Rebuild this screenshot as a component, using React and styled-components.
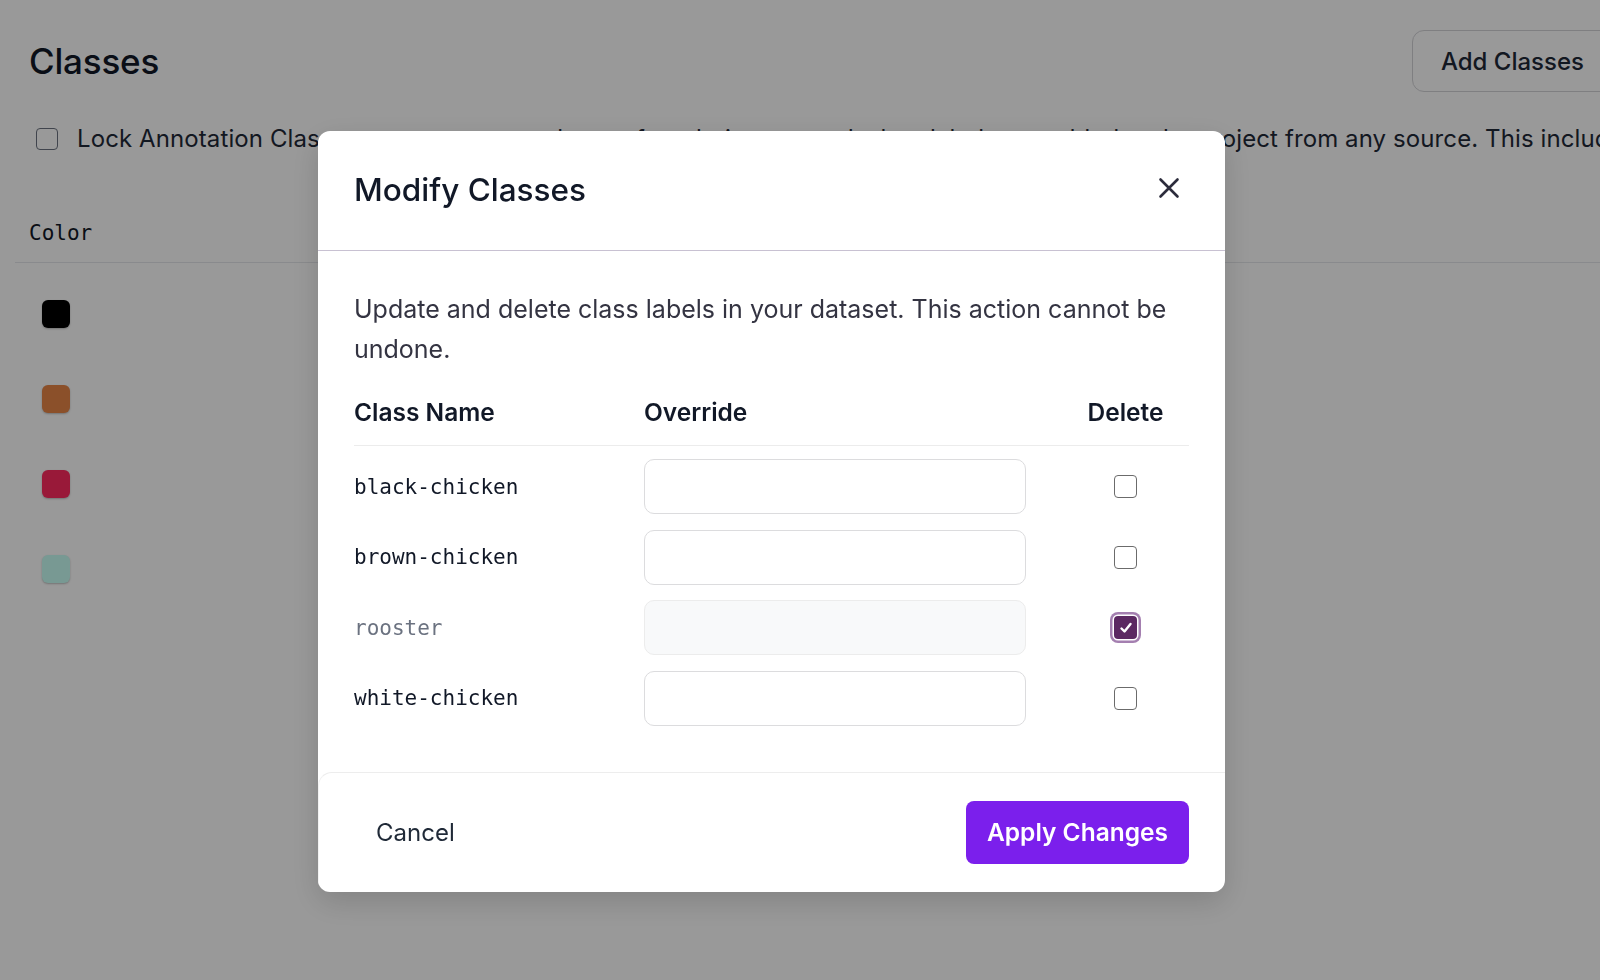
import React from "react";
import styled, { createGlobalStyle } from "styled-components";

const GlobalStyle = createGlobalStyle`
  html, body {
    margin: 0;
    padding: 0;
    background: #ffffff;
    overflow: hidden;
  }
  body {
    font-family: Inter, "Liberation Sans", Arial, sans-serif;
    color: #111827;
  }
  * {
    box-sizing: border-box;
  }
`;

const Page = styled.div`
  width: 1642px;
  height: 980px;
  padding: 30px 29px 0 29px;
`;

const PageHeader = styled.div`
  display: flex;
  align-items: center;
  justify-content: space-between;
  height: 62px;
`;

const PageTitle = styled.h1`
  margin: 0;
  font-size: 35px;
  font-weight: 500;
  letter-spacing: -0.2px;
  color: #111827;
`;

const OutlineButton = styled.button`
  height: 62px;
  padding: 0 28px;
  border: 1px solid #d4d4d8;
  border-radius: 12px;
  background: #ffffff;
  font-family: inherit;
  font-size: 24px;
  font-weight: 500;
  color: #1f2937;
`;

const LockRow = styled.label`
  display: flex;
  align-items: center;
  gap: 19px;
  margin-top: 31px;
  padding-left: 7px;
  font-size: 24px;
  line-height: 32px;
  letter-spacing: 0.1px;
  color: #1f2937;
  white-space: nowrap;
`;

const Box = styled.span`
  flex: none;
  width: 22px;
  height: 22px;
  border: 1.5px solid #6b7280;
  border-radius: 4px;
  background: #ffffff;
`;

const ColorTable = styled.div`
  margin: 50px -14px 0 -14px;
`;

const ColorHead = styled.div`
  padding: 16px 14px 17px;
  border-bottom: 1px solid #e5e7eb;
  font-family: "DejaVu Sans Mono", "Liberation Mono", monospace;
  font-size: 21px;
  line-height: 24px;
  color: #111827;
`;

const ColorBody = styled.div`
  padding-top: 8px;
`;

const ColorRow = styled.div`
  display: flex;
  align-items: center;
  height: 85px;
  padding-left: 27px;
`;

const Swatch = styled.span`
  width: 28px;
  height: 28px;
  border-radius: 6px;
  background: ${(p) => p.$color};
  box-shadow: 0 1px 2px rgba(0, 0, 0, 0.25);
`;

const Overlay = styled.div`
  position: fixed;
  inset: 0;
  background: rgba(0, 0, 0, 0.4);
  display: flex;
  align-items: flex-start;
  padding: 131px 0 0 318px;
`;

const Modal = styled.div`
  width: 907px;
  background: #ffffff;
  border-radius: 12px;
  box-shadow: 0 10px 30px rgba(0, 0, 0, 0.15);
  overflow: hidden;
`;

const ModalHeader = styled.div`
  display: flex;
  align-items: center;
  justify-content: space-between;
  height: 120px;
  padding: 0 36px;
  border-bottom: 1px solid #c8c1d2;
`;

const ModalTitle = styled.h2`
  margin: 0 0 2px;
  font-size: 31.5px;
  font-weight: 500;
  color: #111827;
`;

const CloseButton = styled.button`
  display: flex;
  align-items: center;
  justify-content: center;
  width: 32px;
  height: 32px;
  padding: 0;
  margin: 0 4px 5px 0;
  border: none;
  background: none;
  color: #2c2c3c;
`;

const ModalBody = styled.div`
  padding: 38px 36px 46px;
`;

const Description = styled.p`
  margin: 0;
  font-size: 25px;
  line-height: 40px;
  color: #343442;
`;

const Grid = styled.div`
  display: grid;
  grid-template-columns: 290px 382px 1fr;
  align-items: center;
`;

const HeadRow = styled(Grid)`
  padding: 27px 0 17px;
  border-bottom: 1px solid #ececec;
  font-size: 24.5px;
  line-height: 32px;
  font-weight: 600;
  color: #111827;
`;

const Rows = styled(Grid)`
  row-gap: 15.5px;
  padding-top: 13px;
`;

const DeleteCell = styled.div`
  display: flex;
  justify-content: center;
  padding-left: 36px;
`;

const ClassName = styled.div`
  font-family: "DejaVu Sans Mono", "Liberation Mono", monospace;
  font-size: 21px;
  color: ${(p) => (p.$muted ? "#6b7280" : "#111827")};
`;

const OverrideInput = styled.input`
  width: 382px;
  height: 55px;
  padding: 0 16px;
  border: 1px solid #dcdcde;
  border-radius: 10px;
  background: #ffffff;
  font-family: inherit;
  font-size: 20px;
  outline: none;

  &:disabled {
    background: #f8f9fa;
    border-color: #ececec;
  }
`;

const Check = styled.span`
  display: flex;
  align-items: center;
  justify-content: center;
  width: 23px;
  height: 23px;
  border-radius: 4px;
  border: ${(p) => (p.$checked ? "none" : "1.5px solid #6b6b6b")};
  background: ${(p) => (p.$checked ? "#5c2962" : "#ffffff")};
  box-shadow: ${(p) =>
    p.$checked ? "0 0 0 1.5px #ffffff, 0 0 0 4px #a47fb0" : "none"};
`;

const ModalFooter = styled.div`
  display: flex;
  align-items: center;
  justify-content: space-between;
  height: 120px;
  padding: 0 36px;
  border-top: 1px solid #ededed;
  border-left: 1px solid #f2f2f2;
  border-radius: 14px 0 0 0;
`;

const GhostButton = styled.button`
  height: 63px;
  padding: 0 21px;
  border: none;
  background: none;
  font-family: inherit;
  font-size: 24px;
  color: #1f2937;
`;

const PrimaryButton = styled.button`
  height: 63px;
  padding: 0 21px;
  border: none;
  border-radius: 8px;
  background: #7b1fec;
  font-family: inherit;
  font-size: 24.5px;
  font-weight: 600;
  color: #ffffff;
`;

const classes = [
  { name: "black-chicken", deleted: false },
  { name: "brown-chicken", deleted: false },
  { name: "rooster", deleted: true },
  { name: "white-chicken", deleted: false },
];

const swatchColors = ["#000000", "#e88546", "#ff2b60", "#c8fff6"];

export default function App() {
  return (
    <>
      <GlobalStyle />
      <Page>
        <PageHeader>
          <PageTitle>Classes</PageTitle>
          <OutlineButton>Add Classes</OutlineButton>
        </PageHeader>
        <LockRow>
          <Box />
          Lock Annotation Classes to prevent new classes from being created when labels are added to the project from any source. This includes uploads and labeling.
        </LockRow>
        <ColorTable>
          <ColorHead>Color</ColorHead>
          <ColorBody>
            {swatchColors.map((c) => (
              <ColorRow key={c}>
                <Swatch $color={c} />
              </ColorRow>
            ))}
          </ColorBody>
        </ColorTable>
      </Page>

      <Overlay>
        <Modal>
          <ModalHeader>
            <ModalTitle>Modify Classes</ModalTitle>
            <CloseButton aria-label="Close">
              <svg width="24" height="24" viewBox="0 0 24 24" fill="none" stroke="currentColor" strokeWidth="2.6" strokeLinecap="round">
                <path d="M3.5 3.5 20.5 20.5M20.5 3.5 3.5 20.5" />
              </svg>
            </CloseButton>
          </ModalHeader>
          <ModalBody>
            <Description>
              Update and delete class labels in your dataset. This action cannot be undone.
            </Description>
            <HeadRow>
              <div>Class Name</div>
              <div>Override</div>
              <DeleteCell>Delete</DeleteCell>
            </HeadRow>
            <Rows>
              {classes.map((c) => (
                <React.Fragment key={c.name}>
                  <ClassName $muted={c.deleted}>{c.name}</ClassName>
                  <OverrideInput disabled={c.deleted} />
                  <DeleteCell>
                    <Check $checked={c.deleted}>
                      {c.deleted && (
                        <svg width="16" height="16" viewBox="0 0 16 16" fill="none" stroke="#ffffff" strokeWidth="2.4" strokeLinecap="round" strokeLinejoin="round">
                          <path d="M3.5 8.5 6.5 11.5 12.5 4" />
                        </svg>
                      )}
                    </Check>
                  </DeleteCell>
                </React.Fragment>
              ))}
            </Rows>
          </ModalBody>
          <ModalFooter>
            <GhostButton>Cancel</GhostButton>
            <PrimaryButton>Apply Changes</PrimaryButton>
          </ModalFooter>
        </Modal>
      </Overlay>
    </>
  );
}
